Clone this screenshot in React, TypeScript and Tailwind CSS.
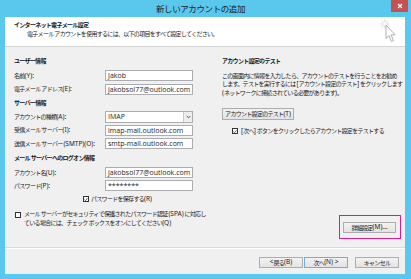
import * as React from "react";

const font = "font-['Noto_Sans','Noto_Sans_CJK_JP',sans-serif]";

/** Japanese text gets tight tracking, ASCII runs keep normal spacing. */
function J({ children }: { children: string }) {
  const parts = children.split(/([\x21-\x7e][\x20-\x7e]*[\x21-\x7e]|[\x21-\x7e])/);
  return (
    <>
      {parts.map((p, i) =>
        i % 2 === 1 ? (
          <span key={i} className="text-[6.5px] tracking-[0px]">
            {p}
          </span>
        ) : (
          p
        )
      )}
    </>
  );
}

function Check({ checked }: { checked?: boolean }) {
  return (
    <span className="flex h-[6px] w-[6px] shrink-0 items-center justify-center border border-[#333] bg-white">
      {checked ? (
        <svg width="5" height="5" viewBox="0 0 5 5">
          <path d="M0.6 2.6 L1.9 3.9 L4.4 0.9" fill="none" stroke="#222" strokeWidth="0.9" />
        </svg>
      ) : null}
    </span>
  );
}

function Input({ children, className }: { children: React.ReactNode; className?: string }) {
  return (
    <div
      className={
        "flex h-[11px] w-[88px] items-center border border-[#abadb3] bg-white px-[2px] font-['Open_Sans',sans-serif] text-[7px] leading-none tracking-[0px] " +
        (className ?? "")
      }
    >
      {children}
    </div>
  );
}

function Field({ label, value }: { label: string; value: string }) {
  return (
    <div className="flex h-[11px] items-center">
      <div className="w-[91px] whitespace-nowrap">
        <J>{label}</J>
      </div>
      <Input>{value}</Input>
    </div>
  );
}

function Section({ children }: { children: string }) {
  return (
    <div className="h-[10px] whitespace-nowrap font-bold leading-[10px]">
      <J>{children}</J>
    </div>
  );
}

function Btn({ children, primary, className }: { children: string; primary?: boolean; className?: string }) {
  return (
    <div
      className={
        "flex h-[11px] items-center justify-center whitespace-nowrap border bg-gradient-to-b from-[#f2f2f2] to-[#e3e3e3] leading-none " +
        (primary ? "border-[#6fabe6] " : "border-[#adadad] ") +
        (className ?? "")
      }
    >
      <J>{children}</J>
    </div>
  );
}

function CursorIcon() {
  return (
    <svg width="18" height="26" viewBox="0 0 18 26">
      <g stroke="#c4c4c4" strokeWidth="0.8">
        <line x1="5" y1="0.5" x2="5" y2="3.5" />
        <line x1="0.5" y1="5" x2="3.5" y2="5" />
        <line x1="1.8" y1="1.8" x2="3.6" y2="3.6" />
        <line x1="8.2" y1="1.8" x2="6.4" y2="3.6" />
        <line x1="1.8" y1="8.2" x2="3.6" y2="6.4" />
        <line x1="9.5" y1="5" x2="6.5" y2="5" />
        <line x1="5" y1="9.5" x2="5" y2="6.5" />
      </g>
      <path
        d="M6 6 L6 19.5 L9 16.6 L11.3 22.5 L13.4 21.6 L11.1 15.9 L15.2 15.9 Z"
        fill="#fff"
        stroke="#a8a8a8"
        strokeWidth="0.9"
        strokeLinejoin="round"
      />
    </svg>
  );
}

export default function App() {
  return (
    <div
      className={
        "flex h-[279px] w-[411px] flex-col overflow-hidden bg-[#5ac8ec] text-[6px] tracking-[-0.7px] text-[#1a1a1a] " + font
      }
    >
      {/* title bar */}
      <div className="flex h-[17px] shrink-0 items-start">
        <div className="flex-1 pl-[10px] pt-[2px] text-center text-[8.5px] leading-[14px] tracking-[-0.4px] text-[#1a1a1a]">
          新しいアカウントの追加
        </div>
        <div className="mr-[3px] flex h-[12px] w-[17px] items-center justify-center bg-[#c75050]">
          <svg width="6" height="6" viewBox="0 0 6 6">
            <path d="M1 1 L5 5 M5 1 L1 5" stroke="#fff" strokeWidth="1.3" />
          </svg>
        </div>
      </div>

      {/* window content */}
      <div className="mb-[5px] ml-[5px] mr-[6px] flex flex-1 flex-col bg-[#f0f0f0]">
        {/* header */}
        <div className="flex h-[30px] shrink-0 border-b border-[#d5d5d5] bg-white">
          <div className="flex-1 pl-[9px] pt-[3.5px] leading-[9px]">
            <div className="font-bold">インターネット電子メール設定</div>
            <div className="pl-[13px]">電子メール アカウントを使用するには、以下の項目をすべて設定してください。</div>
          </div>
          <div className="pr-[7px] pt-[2px]">
            <CursorIcon />
          </div>
        </div>

        {/* body */}
        <div className="flex h-[200px] shrink-0">
          <div className="flex w-[197px] shrink-0 flex-col pl-[9px] pt-[9px]">
            <Section>ユーザー情報</Section>
            <div className="mt-[4px] flex flex-col gap-[2.5px]">
              <Field label="名前(Y):" value="Jakob" />
              <Field label="電子メール アドレス(E):" value="jakobsol77@outlook.com" />
            </div>
            <div className="mt-[3.5px]">
              <Section>サーバー情報</Section>
            </div>
            <div className="mt-[3px] flex flex-col gap-[2.5px]">
              <div className="flex h-[11px] items-center">
                <div className="w-[91px] whitespace-nowrap">
                  <J>アカウントの種類(A):</J>
                </div>
                <Input className="h-[12px] items-stretch pr-0">
                  <div className="flex flex-1 items-center">IMAP</div>
                  <div className="flex w-[9px] items-center justify-center border-l border-[#c9c9c9] bg-[#eeeeee]">
                    <svg width="5" height="4" viewBox="0 0 5 4">
                      <path d="M0.7 1 L2.5 2.8 L4.3 1" fill="none" stroke="#444" strokeWidth="0.9" />
                    </svg>
                  </div>
                </Input>
              </div>
              <Field label="受信メール サーバー(I):" value="imap-mail.outlook.com" />
              <Field label="送信メール サーバー (SMTP)(O):" value="smtp-mail.outlook.com" />
            </div>
            <div className="mt-[4px]">
              <Section>メール サーバーへのログオン情報</Section>
            </div>
            <div className="mt-[4px] flex flex-col gap-[2px]">
              <Field label="アカウント名(U):" value="jakobsol77@outlook.com" />
              <Field label="パスワード(P):" value="********" />
            </div>
            <div className="mt-[3px] flex h-[10px] items-center gap-[2px] pl-[69px]">
              <Check checked />
              <span className="whitespace-nowrap">
                <J>パスワードを保存する(R)</J>
              </span>
            </div>
            <div className="mt-[6px] flex items-start gap-[3px] pl-[1px]">
              <div className="pt-[1.5px]">
                <Check />
              </div>
              <div className="whitespace-nowrap leading-[8.5px]">
                <J>メール サーバーがセキュリティで保護されたパスワード認証 (SPA) に対応し</J>
                <br />
                <J>ている場合には、チェック ボックスをオンにしてください(Q)</J>
              </div>
            </div>
          </div>

          <div className="flex min-w-0 flex-1 flex-col pl-[20px] pr-[4px] pt-[9px]">
            <Section>アカウント設定のテスト</Section>
            <div className="mt-[5.5px] whitespace-nowrap leading-[8.5px]">
              この画面内に情報を入力したら、アカウントのテストを行うことをお勧め
              <br />
              <J>します。テストを実行するには [アカウント設定のテスト] をクリックします</J>
              <br />
              <J>(ネットワークに接続されている必要があります)。</J>
            </div>
            <Btn className="mt-[11px] h-[12px] w-[72px]">アカウント設定のテスト(T)</Btn>
            <div className="mt-[6px] flex h-[10px] items-center gap-[3px] pl-[10px]">
              <Check checked />
              <span className="whitespace-nowrap">
                <J>[次へ] ボタンをクリックしたらアカウント設定をテストする</J>
              </span>
            </div>
            <div className="mb-[8px] mt-auto self-end border-[1.5px] border-[#e8168c] pb-[5px] pl-[3px] pr-[4px] pt-[6px]">
              <Btn className="w-[53px]">詳細設定(M)...</Btn>
            </div>
          </div>
        </div>

        {/* footer */}
        <div className="flex flex-1 items-start justify-end border-t border-[#d9d9d9] pr-[6px] pt-[9px] shadow-[inset_0_1px_0_#ffffff]">
          <Btn className="w-[44px]">{"< 戻る(B)"}</Btn>
          <Btn primary className="ml-[1px] w-[44px]">
            {"次へ(N) >"}
          </Btn>
          <Btn className="ml-[7px] w-[44px]">キャンセル</Btn>
        </div>
      </div>
    </div>
  );
}
